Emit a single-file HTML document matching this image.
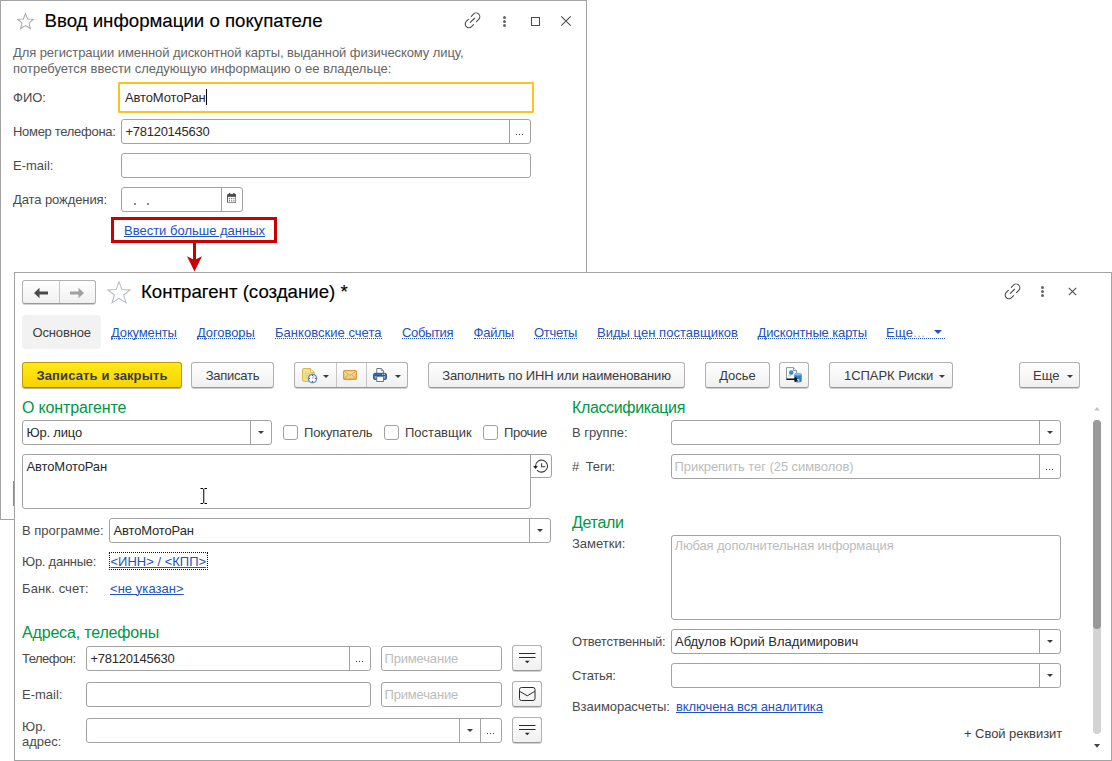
<!DOCTYPE html>
<html lang="ru">
<head>
<meta charset="utf-8">
<title>Контрагент (создание)</title>
<style>
*{box-sizing:border-box;margin:0;padding:0}
html,body{width:1112px;height:761px;overflow:hidden;background:#fff}
body{font-family:"Liberation Sans",sans-serif;font-size:13px;color:#333;position:relative}
.a{position:absolute;white-space:nowrap}
.t{position:absolute;white-space:nowrap;line-height:16px;height:16px;color:#404040}
.lbl{color:#4a4a4a}
.win{position:absolute;background:#fff;border:1px solid #a3a3a3}
.title{position:absolute;white-space:nowrap;font-size:18.67px;line-height:24px;color:#000;-webkit-text-stroke:0.15px #000}
.sec{position:absolute;white-space:nowrap;font-size:16px;line-height:20px;color:#009646}
.inp{position:absolute;background:#fff;border:1px solid #a2a2a2;border-radius:3px;height:25px}
.inp .v{position:absolute;left:3.5px;top:4px;line-height:16px;white-space:nowrap;color:#2a2a2a}
.inp .ph{position:absolute;left:2.5px;top:4px;line-height:16px;white-space:nowrap;color:#bcbcbc}
.sb{position:absolute;top:0;bottom:0;width:21px;border-left:1px solid #a2a2a2}
.dd{position:absolute;left:6px;top:14px;width:1px;height:1px;background:#3a3a3a;box-shadow:3px 0 #3a3a3a,6px 0 #3a3a3a}
.tri{position:absolute;width:0;height:0;border-left:3px solid transparent;border-right:3px solid transparent;border-top:3px solid #3c3c3c}
.btn{position:absolute;height:26px;border:1px solid #b0b0b0;border-bottom-color:#989898;border-radius:3px;background:linear-gradient(#ffffff,#f0f0f0);box-shadow:0 1px 0 rgba(0,0,0,.18);text-align:center;line-height:24px;padding-top:1px;white-space:nowrap;color:#3a3a3a}
.lnk{position:absolute;white-space:nowrap;line-height:16px;color:#2252c0;text-decoration:underline;text-decoration-thickness:1px}
.tab{position:absolute;white-space:nowrap;color:#2252c0;border-bottom:1px dotted #2252c0;height:14px;line-height:16px;top:325px}
.cb{position:absolute;width:15px;height:15px;border:1px solid #a0a0a0;border-radius:3px;background:#fff;top:425px}
.dot{position:absolute;width:3px;height:3px;border-radius:50%;background:#666}
</style>
</head>
<body>

<!-- window 1 -->
<div class="win" style="left:0;top:0;width:587px;height:520px"></div>
<svg class="a" style="left:15.5px;top:12.2px" width="19" height="18.6" viewBox="0 0 18 18"><path d="M9 1.6 L11.1 6.7 L16.6 7.1 L12.4 10.6 L13.7 16 L9 13.1 L4.3 16 L5.6 10.6 L1.4 7.1 L6.9 6.7 Z" fill="none" stroke="#ababab" stroke-width="1"/></svg>
<div class="title" style="left:44.5px;top:9px">Ввод информации о покупателе</div>
<svg class="a" style="left:464px;top:12px" width="18" height="17" viewBox="0 0 18 17"><g fill="none" stroke="#4a4a4a" stroke-width="1.1" stroke-linecap="round"><path d="M7.3 4.3 L9.48 2.08 A3.7 3.7 0 0 1 14.72 7.32 L12.5 9.55"/><path d="M4.4 7.35 L2.28 9.47 A3.7 3.7 0 0 0 7.52 14.71 L9.6 12.6"/><path d="M6.3 10.4 L10.6 6.25"/></g></svg>
<div class="dot" style="left:503px;top:16px"></div>
<div class="dot" style="left:503px;top:20px"></div>
<div class="dot" style="left:503px;top:24px"></div>
<div class="a" style="left:531px;top:17px;width:9px;height:9px;border:1px solid #4a4a4a"></div>
<svg class="a" style="left:560px;top:15px" width="12" height="12" viewBox="0 0 12 12"><path d="M1.3 1.3 L10.7 10.7 M10.7 1.3 L1.3 10.7" stroke="#4a4a4a" stroke-width="1.05" fill="none"/></svg>
<div class="t" style="left:13px;top:45px;letter-spacing:-0.08px;color:#666">Для регистрации именной дисконтной карты, выданной физическому лицу,</div>
<div class="t" style="left:13px;top:61px;color:#666">потребуется ввести следующую информацию о ее владельце:</div>
<div class="t lbl" style="left:13px;top:90px">ФИО:</div>
<div class="inp" style="left:118px;top:82px;width:416px;height:31px;border:2px solid #fbc31d;border-radius:1px"><span class="v" style="left:5px;top:6px;letter-spacing:-0.12px">АвтоМотоРан</span><span class="a" style="left:86px;top:5px;width:1px;height:16px;background:#000"></span></div>
<div class="t lbl" style="left:13px;top:124px;letter-spacing:-0.3px">Номер телефона:</div>
<div class="inp" style="left:121px;top:119px;width:410px"><span class="v" style="letter-spacing:-0.27px">+78120145630</span><div class="sb" style="right:0"><i class="dd"></i></div></div>
<div class="t lbl" style="left:13px;top:158px">E-mail:</div>
<div class="inp" style="left:121px;top:153px;width:410px"></div>
<div class="t lbl" style="left:13px;top:192px;letter-spacing:-0.09px">Дата рождения:</div>
<div class="inp" style="left:121px;top:187px;width:122px"><span class="a" style="left:12px;top:15px;width:1.5px;height:1.5px;background:#8a8a8a"></span><span class="a" style="left:25px;top:15px;width:1.5px;height:1.5px;background:#8a8a8a"></span><div class="sb" style="right:0"><svg class="a" style="left:5px;top:5px" width="9.4" height="10.3" viewBox="0 0 10 11"><rect x="0.5" y="1.5" width="9" height="9" rx="1" fill="#fff" stroke="#4a4a4a"/><rect x="0.5" y="1.5" width="9" height="2.6" fill="#4a4a4a"/><rect x="2" y="0" width="1.4" height="2.5" fill="#4a4a4a"/><rect x="6.6" y="0" width="1.4" height="2.5" fill="#4a4a4a"/><g fill="#666"><rect x="2" y="5.4" width="1.2" height="1.2"/><rect x="4.4" y="5.4" width="1.2" height="1.2"/><rect x="6.8" y="5.4" width="1.2" height="1.2"/><rect x="2" y="7.7" width="1.2" height="1.2"/><rect x="4.4" y="7.7" width="1.2" height="1.2"/><rect x="6.8" y="7.7" width="1.2" height="1.2"/></g></svg></div></div>
<div class="a" style="left:111px;top:217px;width:166px;height:26px;border:3px solid #cc0000"></div>
<div class="lnk" style="left:124px;top:223px">Ввести больше данных</div>
<div class="a" style="left:193px;top:243px;width:3px;height:18px;background:#cc0000"></div>
<svg class="a" style="left:186px;top:255px" width="17" height="17" viewBox="0 0 17 17"><path d="M1 1.3 L8.5 5 L16 1.3 L8.5 16.6 Z" fill="#cc0000"/></svg>

<!-- window 2 -->
<div class="win" style="left:14px;top:272px;width:1098px;height:489px"></div>
<div class="a" style="left:13px;top:481px;width:1px;height:25px;background:#8a8a8a"></div>
<div class="btn" style="left:22px;top:280px;width:74px;height:24px"></div>
<div class="a" style="left:59px;top:281px;width:1px;height:22px;background:#c6c6c6"></div>
<svg class="a" style="left:33px;top:286.5px" width="16" height="12" viewBox="0 0 16 12"><path d="M1 6 L6.5 0.8 L6.5 4.6 L15 4.6 L15 7.4 L6.5 7.4 L6.5 11.2 Z" fill="#4a4a4a"/></svg>
<svg class="a" style="left:69px;top:286.5px" width="16" height="12" viewBox="0 0 16 12"><path d="M15 6 L9.5 0.8 L9.5 4.6 L1 4.6 L1 7.4 L9.5 7.4 L9.5 11.2 Z" fill="#a0a0a0"/></svg>
<svg class="a" style="left:105.5px;top:279.5px" width="26" height="25" viewBox="0 0 25 24"><path d="M12.5 1.8 L15.3 9.2 L23.2 9.5 L17 14.4 L19.2 22 L12.5 17.6 L5.8 22 L8 14.4 L1.8 9.5 L9.7 9.2 Z" fill="none" stroke="#b4bcc4" stroke-width="1"/></svg>
<div class="title" style="left:141px;top:280px">Контрагент (создание) *</div>
<svg class="a" style="left:1004px;top:283px" width="18" height="17" viewBox="0 0 18 17"><g fill="none" stroke="#4a4a4a" stroke-width="1.1" stroke-linecap="round"><path d="M7.3 4.3 L9.48 2.08 A3.7 3.7 0 0 1 14.72 7.32 L12.5 9.55"/><path d="M4.4 7.35 L2.28 9.47 A3.7 3.7 0 0 0 7.52 14.71 L9.6 12.6"/><path d="M6.3 10.4 L10.6 6.25"/></g></svg>
<div class="dot" style="left:1041px;top:286px"></div>
<div class="dot" style="left:1041px;top:290px"></div>
<div class="dot" style="left:1041px;top:294px"></div>
<svg class="a" style="left:1068px;top:287px" width="9" height="9" viewBox="0 0 9 9"><path d="M0.8 0.8 L8.2 8.2 M8.2 0.8 L0.8 8.2" stroke="#4a4a4a" stroke-width="1.05" fill="none"/></svg>
<div class="a" style="left:22px;top:315px;width:79px;height:34px;background:#f2f2f2;border-radius:4px"></div>
<div class="t" style="left:32.5px;top:325px;letter-spacing:-0.14px">Основное</div>
<div class="tab" style="left:111px;letter-spacing:-0.15px">Документы</div>
<div class="tab" style="left:197px;letter-spacing:-0.1px">Договоры</div>
<div class="tab" style="left:275px;letter-spacing:0.03px">Банковские счета</div>
<div class="tab" style="left:402px;letter-spacing:-0.35px">События</div>
<div class="tab" style="left:473.5px;letter-spacing:-0.15px">Файлы</div>
<div class="tab" style="left:534px;letter-spacing:-0.3px">Отчеты</div>
<div class="tab" style="left:597px;letter-spacing:0.03px">Виды цен поставщиков</div>
<div class="tab" style="left:757.5px;letter-spacing:-0.13px">Дисконтные карты</div>
<div class="tab" style="left:886px;width:59px;letter-spacing:0.3px">Еще<span style="color:#8fa6dc">...</span></div>
<svg class="a" style="left:934px;top:330px" width="8" height="4" viewBox="0 0 8 4"><path d="M0 0 H8 L4 4 Z" fill="#2252c0"/></svg>
<div class="btn" style="left:22px;top:362px;width:160px;background:linear-gradient(#ffe81a,#f8d400);border-color:#b89c00;border-bottom-color:#a08600;font-weight:bold;color:#3a3a48;letter-spacing:0.12px;box-shadow:0 1px 0 rgba(0,0,0,.3)">Записать и закрыть</div>
<div class="btn" style="left:191px;top:362px;width:83px;letter-spacing:-0.23px">Записать</div>
<div class="btn" style="left:294px;top:362px;width:114px"></div>
<div class="a" style="left:336px;top:363px;width:1px;height:24px;background:#c6c6c6"></div>
<div class="a" style="left:366px;top:363px;width:1px;height:24px;background:#c6c6c6"></div>
<svg class="a" style="left:302px;top:367px" width="18" height="17" viewBox="0 0 18 17"><path d="M1.4 1.6 H8.4 L12.2 5.4 V14.3 H1.4 Q0.6 14.3 0.6 13.5 V2.4 Q0.6 1.6 1.4 1.6 Z" fill="#f6e391" stroke="#d4b24c" stroke-width="1"/><path d="M8.4 1.6 V4.6 Q8.4 5.4 9.2 5.4 H12.2" fill="#fbefb4" stroke="#d4b24c" stroke-width="1"/><path d="M2.6 6.6 H4.2 M5.2 6.6 H7.6 M2.6 8.7 H3.3 M4.3 8.7 H6 M2.6 10.8 H5" stroke="#dcc062" stroke-width="0.9"/><circle cx="10.5" cy="11.5" r="4.15" fill="#fff" stroke="#5b8fc6" stroke-width="1.3"/><g fill="#e61e1e"><rect x="9.95" y="8" width="1.1" height="1.1"/><rect x="9.95" y="13.9" width="1.1" height="1.1"/><rect x="7" y="10.95" width="1.1" height="1.1"/><rect x="12.9" y="10.95" width="1.1" height="1.1"/></g><path d="M10.5 11.6 L11.9 9.4" stroke="#9db4e0" stroke-width="1.1"/></svg>
<svg class="a" style="left:323px;top:375px" width="6" height="3" viewBox="0 0 6 3"><path d="M0 0 H6 L3 3 Z" fill="#3a3a3a"/></svg>
<svg class="a" style="left:343px;top:370px" width="14" height="10" viewBox="0 0 14 10"><defs><linearGradient id="mg" x1="0" y1="0" x2="0" y2="1"><stop offset="0" stop-color="#fbe6b0"/><stop offset="1" stop-color="#f2c268"/></linearGradient></defs><rect x="0.6" y="0.6" width="12.8" height="8.8" rx="1.2" fill="url(#mg)" stroke="#d8983a" stroke-width="1.2"/><path d="M1.2 1.2 L7 5.4 L12.8 1.2 M1.2 8.8 L5.4 4.3 M12.8 8.8 L8.6 4.3" fill="none" stroke="#dca040" stroke-width="0.9"/></svg>
<svg class="a" style="left:373px;top:368px" width="14" height="14" viewBox="0 0 14 14"><path d="M3.8 5.4 V0.5 H8.2 L10.4 2.7 V5.4" fill="#fff" stroke="#566c88" stroke-width="0.9"/><path d="M8.2 0.5 V2.7 H10.4" fill="none" stroke="#566c88" stroke-width="0.7"/><rect x="0.6" y="5.3" width="12.8" height="6.2" rx="1.3" fill="#3d6ea6" stroke="#2a5585" stroke-width="1"/><rect x="1.9" y="7.6" width="10.2" height="3.2" fill="#8eb0da"/><rect x="1.8" y="6.9" width="10.4" height="0.9" fill="#244a78"/><rect x="9.2" y="5.9" width="1.1" height="0.8" fill="#fff"/><rect x="11" y="5.9" width="1.1" height="0.8" fill="#fff"/><rect x="3.8" y="8.3" width="6.6" height="5.2" fill="#fff" stroke="#566c88" stroke-width="0.9"/></svg>
<svg class="a" style="left:395px;top:375px" width="6" height="3" viewBox="0 0 6 3"><path d="M0 0 H6 L3 3 Z" fill="#3a3a3a"/></svg>
<div class="btn" style="left:428px;top:362px;width:257px;letter-spacing:-0.14px">Заполнить по ИНН или наименованию</div>
<div class="btn" style="left:705px;top:362px;width:65px">Досье</div>
<div class="btn" style="left:779px;top:362px;width:30px"></div>
<svg class="a" style="left:785px;top:367px" width="18" height="16" viewBox="0 0 18 16"><path d="M1.5 0.6 H8.5 L11.5 3.6 V12.4 H1.5 Z" fill="#fff" stroke="#7c8a9a" stroke-width="0.9"/><path d="M8.5 0.6 V3.6 H11.5" fill="#dfe6ee" stroke="#7c8a9a" stroke-width="0.9"/><circle cx="6.2" cy="5.6" r="2.3" fill="#2f86d6"/><path d="M5 4.6 Q6.2 3.8 7 5 Q6.4 6.4 5.4 6.2 Z" fill="#4cb848"/><path d="M3 8.8 H6" stroke="#9aa6b2" stroke-width="0.8"/><path d="M9.3 7.2 V14 Q9.3 15.4 13 15.4 Q16.7 15.4 16.7 14 V7.2 Z" fill="#2e7fd0"/><ellipse cx="13" cy="7.2" rx="3.7" ry="1.4" fill="#7fb8ee"/><path d="M1.5 11.6 H9.6 V9.4 L14 12.3 L9.6 15.2 V13 H1.5 Z" fill="#111"/><path d="M12 12.6 Q14.4 11 13.6 14.6" fill="none" stroke="#fff" stroke-width="0.9"/></svg>
<div class="btn" style="left:829px;top:362px;width:124px;text-align:left;padding-left:14px;letter-spacing:-0.05px">1СПАРК Риски</div>
<div class="tri" style="left:939px;top:375px;border-left-width:3.5px;border-right-width:3.5px;border-top-width:3.5px"></div>
<div class="btn" style="left:1019px;top:362px;width:61px;text-align:left;padding-left:13px">Еще</div>
<div class="tri" style="left:1067px;top:375px;border-left-width:3.5px;border-right-width:3.5px;border-top-width:3.5px"></div>
<div class="sec" style="left:22px;top:398px;letter-spacing:-0.15px">О контрагенте</div>
<div class="inp" style="left:22px;top:420px;width:250px"><span class="v" style="letter-spacing:-0.19px">Юр. лицо</span><div class="sb" style="right:0"><div class="tri" style="left:7px;top:10px"></div></div></div>
<div class="cb" style="left:283px"></div>
<div class="t" style="left:304px;top:425px;letter-spacing:-0.14px">Покупатель</div>
<div class="cb" style="left:384px"></div>
<div class="t" style="left:405px;top:425px">Поставщик</div>
<div class="cb" style="left:483px"></div>
<div class="t" style="left:504px;top:425px;letter-spacing:-0.3px">Прочие</div>
<div class="inp" style="left:22px;top:454px;width:509px;height:55px;border-top-right-radius:0"><span class="v" style="letter-spacing:-0.13px">АвтоМотоРан</span></div>
<div class="inp" style="left:530px;top:454px;width:22px;height:24px;border-top-left-radius:0;border-bottom-left-radius:0"></div>
<svg class="a" style="left:532px;top:458px" width="18" height="17" viewBox="0 0 18 17"><path d="M5 12.1 A6 6 0 1 0 3.5 8.2" fill="none" stroke="#3a3a3a" stroke-width="1.05"/><path d="M1.1 7.9 L5.9 7.9 L3.5 11.1 Z" fill="#222"/><path d="M9.6 5.2 V8.8 H13.3" fill="none" stroke="#3a3a3a" stroke-width="1.05"/></svg>
<svg class="a" style="left:200px;top:488px" width="8" height="16" viewBox="0 0 8 16"><path d="M0.5 0.5 H3 M4.5 0.5 H7 M0.5 15.5 H3 M4.5 15.5 H7 M3.75 0.8 V15.2" stroke="#000" stroke-width="1" fill="none"/></svg>
<div class="t lbl" style="left:22px;top:523px">В программе:</div>
<div class="inp" style="left:109px;top:518px;width:442px"><span class="v" style="letter-spacing:-0.15px">АвтоМотоРан</span><div class="sb" style="right:0"><div class="tri" style="left:7px;top:10px"></div></div></div>
<div class="t lbl" style="left:22px;top:554px;letter-spacing:-0.25px">Юр. данные:</div>
<div class="a" style="left:109px;top:552px;width:99px;height:18px;border:1px dotted #111"></div>
<div class="lnk" style="left:110.5px;top:554px">&lt;ИНН&gt; / &lt;КПП&gt;</div>
<div class="t lbl" style="left:22px;top:581px;letter-spacing:0.13px">Банк. счет:</div>
<div class="lnk" style="left:110px;top:581px;letter-spacing:0.05px">&lt;не указан&gt;</div>
<div class="sec" style="left:22px;top:623px;letter-spacing:-0.17px">Адреса, телефоны</div>
<div class="t lbl" style="left:22px;top:651px;letter-spacing:-0.5px">Телефон:</div>
<div class="inp" style="left:86px;top:646px;width:285px"><span class="v" style="letter-spacing:-0.27px">+78120145630</span><div class="sb" style="right:0"><i class="dd"></i></div></div>
<div class="inp" style="left:381px;top:646px;width:121px"><span class="ph" style="letter-spacing:-0.17px">Примечание</span></div>
<div class="btn" style="left:512px;top:645px;width:30px;height:26px"><svg class="a" style="left:6px;top:7px" width="17" height="12" viewBox="0 0 17 12" shape-rendering="auto"><path d="M0 0.5 H16.5 M0 4.5 H16.5" stroke="#2a2a2a" stroke-width="1"/><path d="M5.8 7.7 H10.7 L8.25 10.2 Z" fill="#2a2a2a"/></svg></div>
<div class="t lbl" style="left:22px;top:687px">E-mail:</div>
<div class="inp" style="left:86px;top:682px;width:285px"></div>
<div class="inp" style="left:381px;top:682px;width:121px"><span class="ph" style="letter-spacing:-0.17px">Примечание</span></div>
<div class="btn" style="left:512px;top:681px;width:30px;height:26px"><svg class="a" style="left:6px;top:5px" width="17" height="14" viewBox="0 0 17 14"><rect x="0.5" y="0.5" width="15.5" height="13" rx="2" fill="none" stroke="#2a2a2a" stroke-width="1"/><path d="M0.8 4.4 L8.25 8.8 L15.7 4.4" fill="none" stroke="#2a2a2a" stroke-width="1"/></svg></div>
<div class="t lbl" style="left:22px;top:719px">Юр.</div>
<div class="t lbl" style="left:22px;top:734px">адрес:</div>
<div class="inp" style="left:86px;top:718px;width:416px"><div class="sb" style="right:21px;width:21px"><div class="tri" style="left:7px;top:10px"></div></div><div class="sb" style="right:0"><i class="dd"></i></div></div>
<div class="btn" style="left:512px;top:717px;width:30px;height:26px"><svg class="a" style="left:6px;top:7px" width="17" height="12" viewBox="0 0 17 12" shape-rendering="auto"><path d="M0 0.5 H16.5 M0 4.5 H16.5" stroke="#2a2a2a" stroke-width="1"/><path d="M5.8 7.7 H10.7 L8.25 10.2 Z" fill="#2a2a2a"/></svg></div>
<div class="sec" style="left:572px;top:398px;letter-spacing:-0.36px">Классификация</div>
<div class="t lbl" style="left:572px;top:425px">В группе:</div>
<div class="inp" style="left:671px;top:420px;width:390px"><div class="sb" style="right:0"><div class="tri" style="left:6.5px;top:10px"></div></div></div>
<div class="t lbl" style="left:572px;top:459px;letter-spacing:-0.2px">#&nbsp; Теги:</div>
<div class="inp" style="left:671px;top:454px;width:390px"><span class="ph" style="letter-spacing:-0.07px">Прикрепить тег (25 символов)</span><div class="sb" style="right:0"><i class="dd"></i></div></div>
<div class="sec" style="left:572px;top:513px;letter-spacing:-0.3px">Детали</div>
<div class="t lbl" style="left:572px;top:536px">Заметки:</div>
<div class="inp" style="left:671px;top:535px;width:390px;height:85px"><span class="ph" style="top:2px;letter-spacing:-0.15px">Любая дополнительная информация</span></div>
<div class="t lbl" style="left:572px;top:634px;letter-spacing:-0.21px">Ответственный:</div>
<div class="inp" style="left:671px;top:629px;width:390px"><span class="v" style="left:3px">Абдулов Юрий Владимирович</span><div class="sb" style="right:0"><div class="tri" style="left:6.5px;top:10px"></div></div></div>
<div class="t lbl" style="left:572px;top:668px;letter-spacing:-0.28px">Статья:</div>
<div class="inp" style="left:671px;top:663px;width:390px"><div class="sb" style="right:0"><div class="tri" style="left:6.5px;top:10px"></div></div></div>
<div class="t lbl" style="left:572px;top:699px;letter-spacing:-0.05px">Взаиморасчеты:</div>
<div class="lnk" style="left:676px;top:699px;letter-spacing:-0.08px">включена вся аналитика</div>
<div class="t" style="left:964px;top:726px;letter-spacing:-0.05px">+ Свой реквизит</div>
<svg class="a" style="left:1093px;top:406px" width="8" height="6" viewBox="0 0 8 6"><path d="M1 4.6 L4 1 L7 4.6 Z" fill="#c4c4c4"/></svg>
<div class="a" style="left:1093px;top:420px;width:8px;height:314px;border-radius:4px;background:#d3d3d3"></div>
<div class="a" style="left:1093px;top:420px;width:8px;height:209px;border-radius:4px;background:#999"></div>
<svg class="a" style="left:1093px;top:743px" width="8" height="6" viewBox="0 0 8 6"><path d="M1 1 L7 1 L4 4.8 Z" fill="#444"/></svg>

</body>
</html>
